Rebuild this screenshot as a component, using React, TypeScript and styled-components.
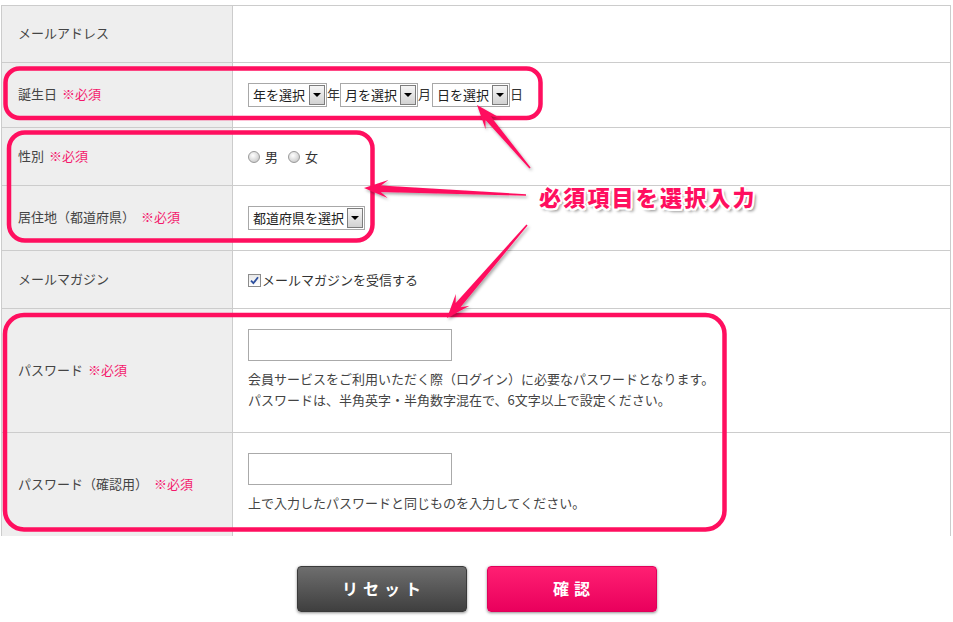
import React from "react";
import styled, { createGlobalStyle } from "styled-components";

const PINK = "#ff0f5f";
const REQ = "#f4186c";

const Global = createGlobalStyle`
  *, *::before, *::after { box-sizing: border-box; }
  html, body { margin: 0; padding: 0; background: #ffffff; }
  body {
    font-family: "Noto Sans CJK JP", "Noto Sans", sans-serif;
    color: #333333;
  }
`;

const Page = styled.div`
  position: relative;
  width: 953px;
  height: 622px;
  overflow: hidden;
  padding-top: 5px;
`;

const Table = styled.div`
  margin-left: 1px;
  width: 950px;
  border: 1px solid #cccccc;
  border-bottom: none;
`;

const Row = styled.div<{ $h: number; $last?: boolean }>`
  display: flex;
  height: ${(p) => p.$h}px;
  border-bottom: ${(p) => (p.$last ? "none" : "1px solid #cccccc")};
`;

const Th = styled.div`
  width: 231px;
  flex: none;
  background: #eeeeee;
  border-right: 1px solid #cccccc;
  padding: 0 0 3px 16px;
  display: flex;
  align-items: center;
  font-size: 13px;
  color: #444444;
  white-space: nowrap;
`;

const Req = styled.span<{ $gap?: number }>`
  color: ${REQ};
  margin-left: ${(p) => p.$gap ?? 5}px;
`;

const Td = styled.div<{ $col?: boolean }>`
  flex: 1;
  padding: 0 0 ${(p) => (p.$col ? 3 : 1)}px 15px;
  display: flex;
  flex-direction: ${(p) => (p.$col ? "column" : "row")};
  align-items: ${(p) => (p.$col ? "flex-start" : "center")};
  justify-content: ${(p) => (p.$col ? "center" : "flex-start")};
  font-size: 13px;
  color: #333333;
`;

const Inline = styled.div`
  display: flex;
  align-items: center;
`;

const SelectWrap = styled.span<{ $w: number }>`
  display: inline-flex;
  width: ${(p) => p.$w}px;
  height: 24px;
  border: 1px solid #a8a8a8;
  background: #ffffff;
  padding: 1px;
`;

const Select = styled.select`
  appearance: none;
  -webkit-appearance: none;
  flex: 1;
  min-width: 0;
  border: none;
  outline: none;
  background: transparent;
  font-family: inherit;
  font-size: 13px;
  line-height: 20px;
  height: 20px;
  padding: 0 0 1px 3px;
  color: #222222;
`;

const SelectBtn = styled.span`
  width: 16px;
  flex: none;
  border: 1px solid #7d7d7d;
  background: linear-gradient(#f6f6f6, #d2d2d2);
  display: flex;
  align-items: center;
  justify-content: center;
  &::after {
    content: "";
    border-left: 4px solid transparent;
    border-right: 4px solid transparent;
    border-top: 4px solid #000000;
  }
`;

const Unit = styled.span<{ $right?: number }>`
  font-size: 13px;
  margin: 0 ${(p) => p.$right ?? 0}px 2px 0;
  color: #333333;
`;

const RadioLabel = styled.label`
  display: inline-flex;
  align-items: center;
  margin-right: 10px;
  font-size: 13px;
  color: #333333;
`;

const RadioDot = styled.span`
  width: 12px;
  height: 12px;
  border-radius: 50%;
  border: 1px solid #9a9a9a;
  background: radial-gradient(circle at 40% 35%, #ffffff 0%, #e2e2e2 45%, #bdbdbd 100%);
  margin: 2px 5px 0 0;
`;

const CheckLabel = styled.label`
  display: inline-flex;
  align-items: center;
  font-size: 13px;
  color: #333333;
`;

const CheckBox = styled.span`
  width: 13px;
  height: 13px;
  border: 1px solid #8c8c8c;
  background: linear-gradient(#e8e8e8, #ffffff);
  display: flex;
  align-items: center;
  justify-content: center;
  margin: 2px 1px 0 0;
`;

const TextInput = styled.input`
  width: 204px;
  height: 32px;
  flex: none;
  border: 1px solid #aaaaaa;
  background: #ffffff;
  outline: none;
  padding: 0 4px;
  font-size: 13px;
`;

const Help = styled.p`
  margin: 7px 0 0 0;
  font-size: 13px;
  line-height: 21px;
  color: #444444;
`;

const Buttons = styled.div`
  display: flex;
  justify-content: center;
  gap: 20px;
  margin-top: 30px;
`;

const Btn = styled.button<{ $tone: "dark" | "pink" }>`
  width: 170px;
  height: 46px;
  border-radius: 4px;
  border: 1px solid ${(p) => (p.$tone === "dark" ? "#3a3a3a" : "#e0005a")};
  background: ${(p) =>
    p.$tone === "dark"
      ? "linear-gradient(#6e6e6e, #3f3f3f)"
      : "linear-gradient(#ff1f72, #e9005c)"};
  box-shadow: 0 1px 3px rgba(0, 0, 0, 0.45);
  color: #ffffff;
  font-family: inherit;
  font-size: 16px;
  font-weight: 700;
  letter-spacing: 5px;
  text-indent: 5px;
  padding: 0 0 3px 0;
  cursor: pointer;
`;

const Overlay = styled.div`
  position: absolute;
  left: 0;
  top: 0;
  width: 953px;
  height: 622px;
  pointer-events: none;
`;

const Drawing = styled.svg`
  position: absolute;
  left: 0;
  top: 0;
`;

const Callout = styled.span`
  position: absolute;
  left: 539px;
  top: 180px;
  font-size: 22px;
  font-weight: 900;
  letter-spacing: 2.2px;
  color: ${PINK};
  white-space: nowrap;
  text-shadow:
    -1.5px -1.5px 0 #fff, 1.5px -1.5px 0 #fff, -1.5px 1.5px 0 #fff, 1.5px 1.5px 0 #fff,
    0 -2px 0 #fff, 0 2px 0 #fff, -2px 0 0 #fff, 2px 0 0 #fff,
    3px 3px 3px rgba(0, 0, 0, 0.45);
`;

function arrowPoints(tx: number, ty: number, hx: number, hy: number): string {
  const dx = hx - tx;
  const dy = hy - ty;
  const len = Math.hypot(dx, dy);
  const ux = dx / len;
  const uy = dy / len;
  const nx = -uy;
  const ny = ux;
  const headLen = 24;
  const headHalf = 9;
  const notch = 7;
  const tailHalf = 0.8;
  const shaftHalf = 3.2;
  const bx = hx - ux * headLen;
  const by = hy - uy * headLen;
  const sx = hx - ux * (headLen - notch);
  const sy = hy - uy * (headLen - notch);
  const pts = [
    [tx + nx * tailHalf, ty + ny * tailHalf],
    [sx + nx * shaftHalf, sy + ny * shaftHalf],
    [bx + nx * headHalf, by + ny * headHalf],
    [hx, hy],
    [bx - nx * headHalf, by - ny * headHalf],
    [sx - nx * shaftHalf, sy - ny * shaftHalf],
    [tx - nx * tailHalf, ty - ny * tailHalf],
  ];
  return pts.map((p) => `${p[0].toFixed(1)},${p[1].toFixed(1)}`).join(" ");
}

const arrows = [
  { t: [530, 168], h: [477, 105] },
  { t: [526, 195], h: [364, 188] },
  { t: [527, 225], h: [447, 318] },
];

const boxes = [
  { x: 5.5, y: 68.5, w: 535, h: 49.5, r: 14 },
  { x: 9, y: 132.5, w: 363.5, h: 108, r: 16 },
  { x: 5, y: 315, w: 719.5, h: 214.5, r: 19 },
];

function SelectBox({ w, label }: { w: number; label: string }) {
  return (
    <SelectWrap $w={w}>
      <Select defaultValue={label}>
        <option>{label}</option>
      </Select>
      <SelectBtn />
    </SelectWrap>
  );
}

export default function App() {
  return (
    <>
      <Global />
      <Page>
        <Table>
          <Row $h={57}>
            <Th>メールアドレス</Th>
            <Td />
          </Row>
          <Row $h={65}>
            <Th>
              誕生日<Req>※必須</Req>
            </Th>
            <Td>
              <Inline>
                <SelectBox w={79} label="年を選択" />
                <Unit>年</Unit>
                <SelectBox w={78} label="月を選択" />
                <Unit $right={1}>月</Unit>
                <SelectBox w={78} label="日を選択" />
                <Unit>日</Unit>
              </Inline>
            </Td>
          </Row>
          <Row $h={58}>
            <Th>
              性別<Req>※必須</Req>
            </Th>
            <Td>
              <RadioLabel>
                <RadioDot />男
              </RadioLabel>
              <RadioLabel>
                <RadioDot />女
              </RadioLabel>
            </Td>
          </Row>
          <Row $h={65}>
            <Th>
              居住地（都道府県）<Req $gap={6}>※必須</Req>
            </Th>
            <Td>
              <SelectBox w={117} label="都道府県を選択" />
            </Td>
          </Row>
          <Row $h={58}>
            <Th>メールマガジン</Th>
            <Td>
              <CheckLabel>
                <CheckBox>
                  <svg width="9" height="9" viewBox="0 0 9 9">
                    <path d="M1 4.6 L3.4 7.2 L8 1.2" fill="none" stroke="#2d4f9e" strokeWidth="1.8" />
                  </svg>
                </CheckBox>
                メールマガジンを受信する
              </CheckLabel>
            </Td>
          </Row>
          <Row $h={124}>
            <Th>
              パスワード<Req>※必須</Req>
            </Th>
            <Td $col>
              <TextInput type="password" />
              <Help>
                会員サービスをご利用いただく際（ログイン）に必要なパスワードとなります。
                <br />
                パスワードは、半角英字・半角数字混在で、6文字以上で設定ください。
              </Help>
            </Td>
          </Row>
          <Row $h={103} $last>
            <Th>
              パスワード（確認用）<Req $gap={6}>※必須</Req>
            </Th>
            <Td $col>
              <TextInput type="password" />
              <Help>上で入力したパスワードと同じものを入力してください。</Help>
            </Td>
          </Row>
        </Table>
        <Buttons>
          <Btn $tone="dark">リセット</Btn>
          <Btn $tone="pink">確認</Btn>
        </Buttons>
        <Overlay>
          <Drawing width="953" height="622" viewBox="0 0 953 622">
            <defs>
              <filter id="shadow" x="-10%" y="-10%" width="130%" height="130%">
                <feDropShadow dx="1.5" dy="2" stdDeviation="1.5" floodColor="#000" floodOpacity="0.35" />
              </filter>
            </defs>
            {boxes.map((b, i) => (
              <rect
                key={i}
                x={b.x}
                y={b.y}
                width={b.w}
                height={b.h}
                rx={b.r}
                ry={b.r}
                fill="none"
                stroke={PINK}
                strokeWidth="4.5"
              />
            ))}
            {arrows.map((a, i) => (
              <polygon
                key={i}
                points={arrowPoints(a.t[0], a.t[1], a.h[0], a.h[1])}
                fill={PINK}
                filter="url(#shadow)"
              />
            ))}
          </Drawing>
          <Callout>必須項目を選択入力</Callout>
        </Overlay>
      </Page>
    </>
  );
}
